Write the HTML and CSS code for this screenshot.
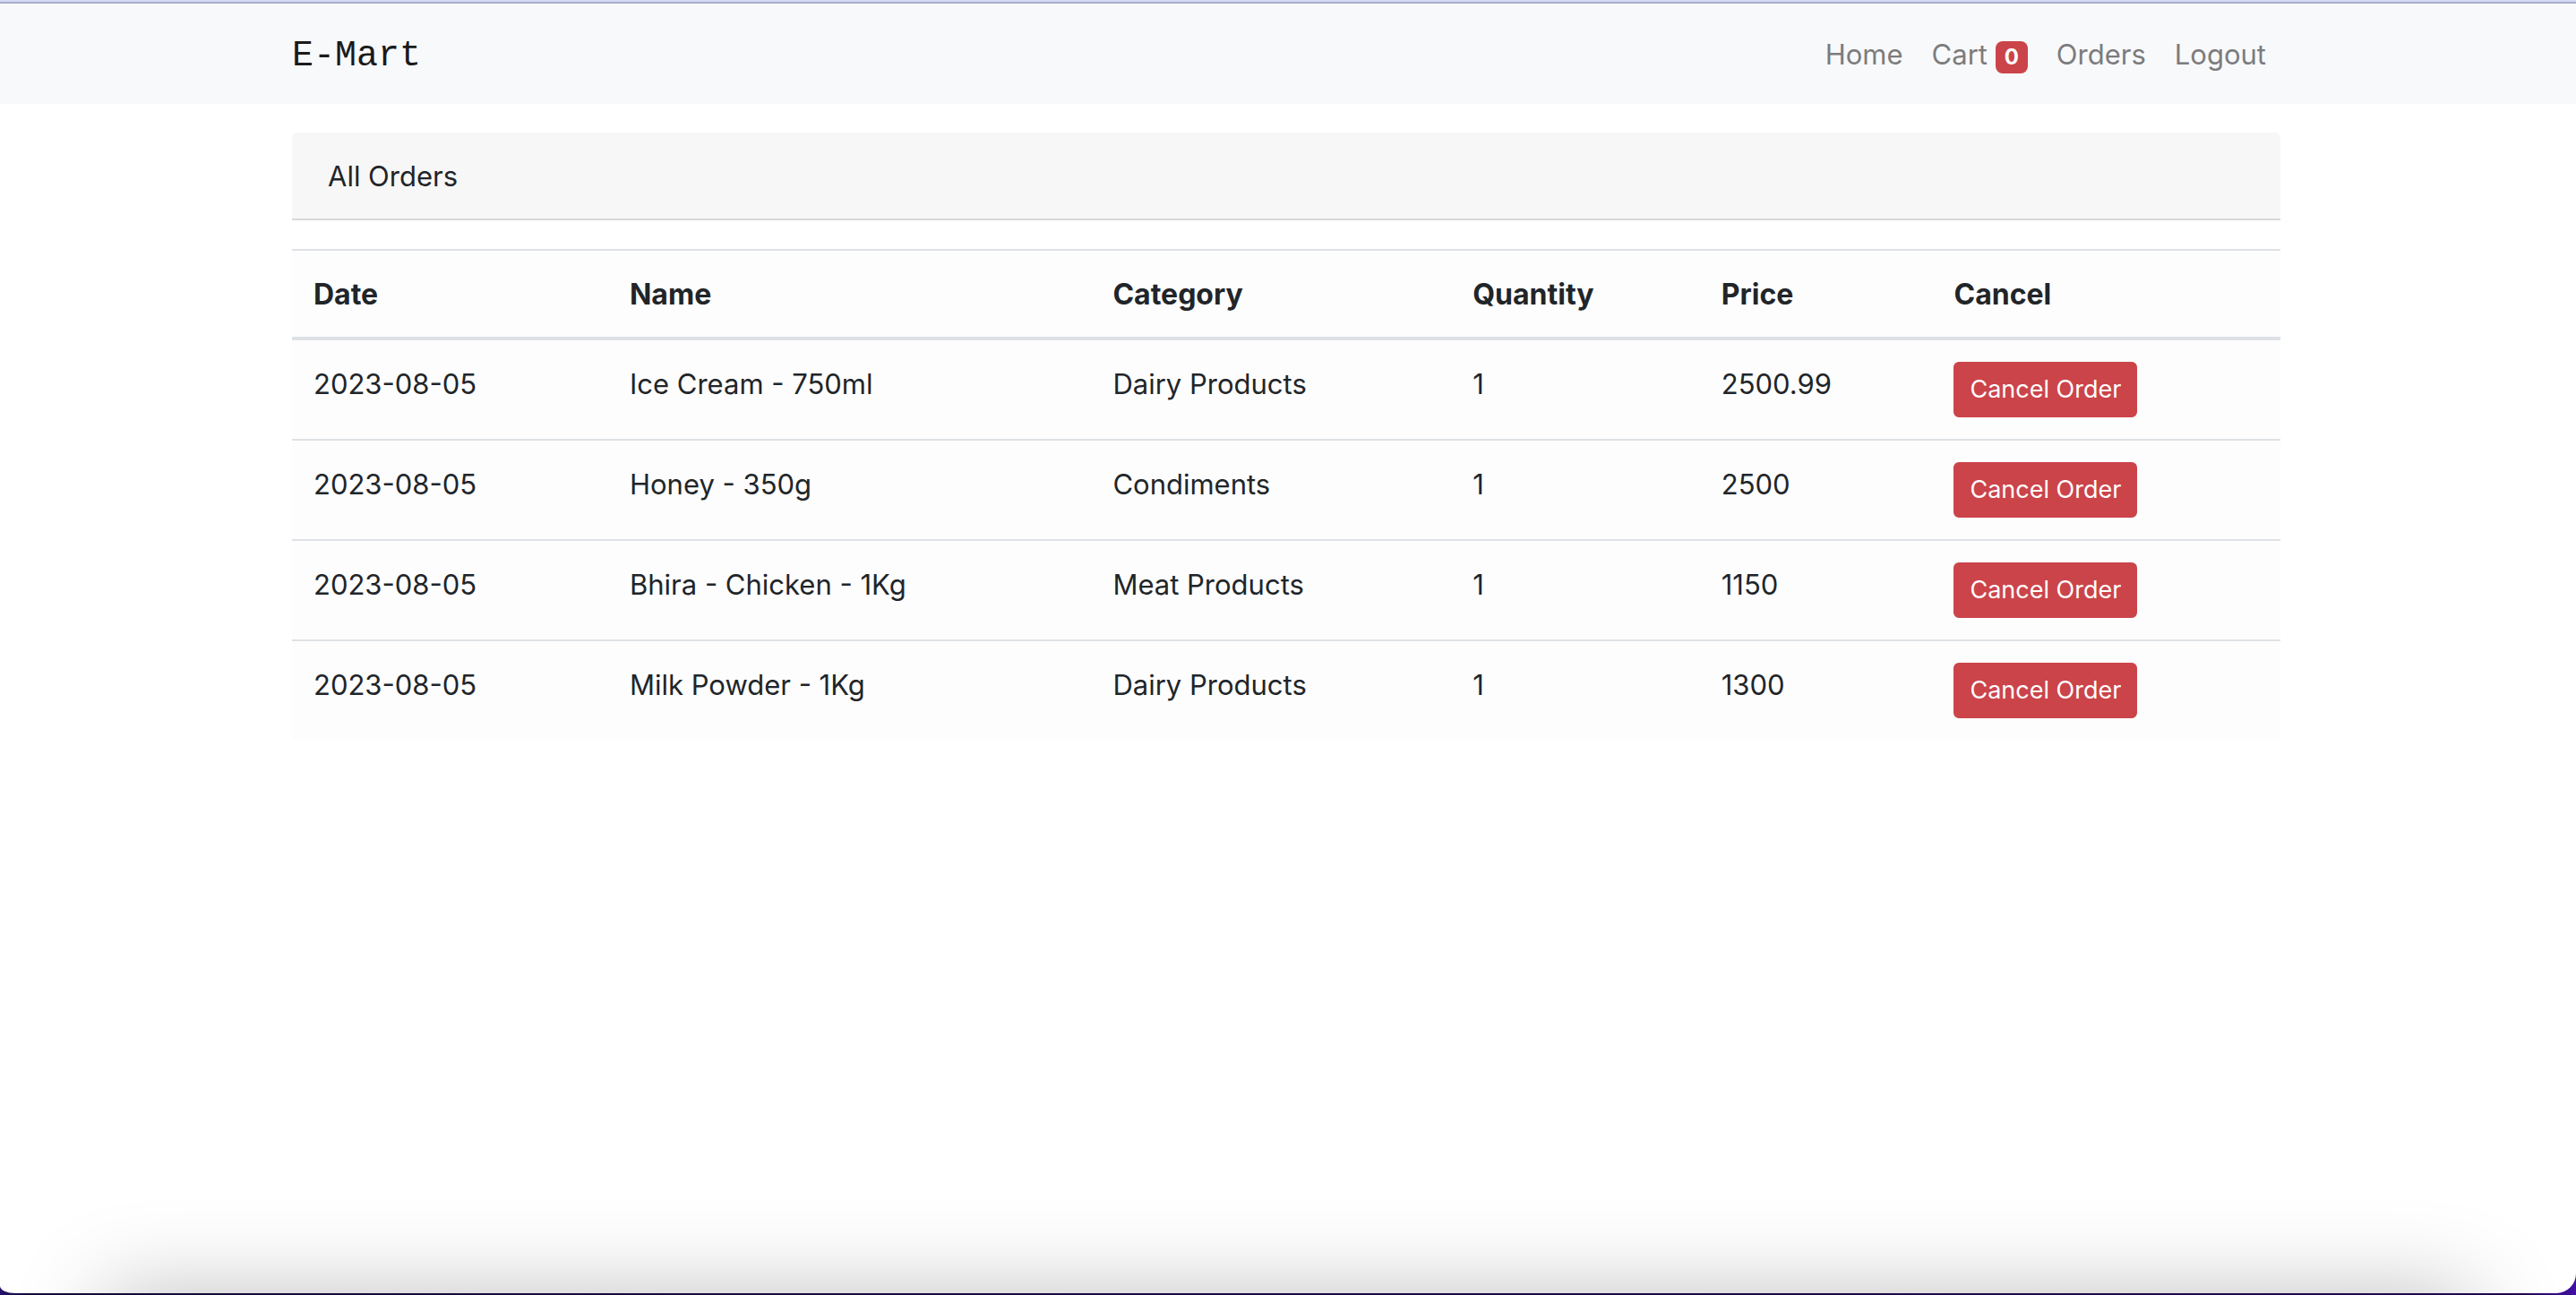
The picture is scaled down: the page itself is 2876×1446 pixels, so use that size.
FILE: index.html
```html
<!DOCTYPE html>
<html lang="en">
<head>
  <meta charset="utf-8">
  <meta name="viewport" content="width=device-width, initial-scale=1">
  <title>E-Mart</title>
  <link rel="stylesheet" href="styles.css">
</head>
<body>
  <div class="page">
    <header class="navbar">
      <div class="container navbar-inner">
        <a class="brand" href="#">E-Mart</a>
        <nav class="nav">
          <a class="nav-link" href="#">Home</a>
          <a class="nav-link" href="#">Cart <span class="badge">0</span></a>
          <a class="nav-link" href="#">Orders</a>
          <a class="nav-link" href="#">Logout</a>
        </nav>
      </div>
    </header>

    <main class="container content">
      <h1 class="card-header">All Orders</h1>
      <table class="orders">
        <colgroup>
          <col class="col-date">
          <col class="col-name">
          <col class="col-category">
          <col class="col-quantity">
          <col class="col-price">
          <col class="col-cancel">
        </colgroup>
        <thead>
          <tr>
            <th scope="col">Date</th>
            <th scope="col">Name</th>
            <th scope="col">Category</th>
            <th scope="col">Quantity</th>
            <th scope="col">Price</th>
            <th scope="col">Cancel</th>
          </tr>
        </thead>
        <tbody>
          <tr>
            <td>2023-08-05</td>
            <td>Ice Cream - 750ml</td>
            <td>Dairy Products</td>
            <td>1</td>
            <td>2500.99</td>
            <td class="action"><button class="btn" type="button">Cancel Order</button></td>
          </tr>
          <tr>
            <td>2023-08-05</td>
            <td>Honey - 350g</td>
            <td>Condiments</td>
            <td>1</td>
            <td>2500</td>
            <td class="action"><button class="btn" type="button">Cancel Order</button></td>
          </tr>
          <tr>
            <td>2023-08-05</td>
            <td>Bhira - Chicken - 1Kg</td>
            <td>Meat Products</td>
            <td>1</td>
            <td>1150</td>
            <td class="action"><button class="btn" type="button">Cancel Order</button></td>
          </tr>
          <tr>
            <td>2023-08-05</td>
            <td>Milk Powder - 1Kg</td>
            <td>Dairy Products</td>
            <td>1</td>
            <td>1300</td>
            <td class="action"><button class="btn" type="button">Cancel Order</button></td>
          </tr>
        </tbody>
      </table>
    </main>
  </div>
</body>
</html>
```
FILE: styles.css
```css
*,
*::before,
*::after {
  box-sizing: border-box;
}

body {
  margin: 0;
  min-height: 100vh;
  padding-bottom: 2px;
  background: linear-gradient(90deg, #25106b 0, #150b38 30px, #22084f calc(100% - 60px), #420fa5 100%);
  color: #212529;
  font-family: Inter, "Liberation Sans", sans-serif;
  font-size: 31px;
  line-height: 48px;
}

.page {
  position: relative;
  overflow: hidden;
  min-height: calc(100vh - 2px);
  border-top: 2px solid #d5dbf7;
  border-radius: 0 0 22px 17px / 0 0 22px 8px;
  background: #fff;
}

/* soft shadow along the bottom edge of the window */
.page::after {
  content: "";
  position: absolute;
  top: 100%;
  left: 116px;
  right: 116px;
  height: 200px;
  box-shadow: 0 0 100px rgba(0, 0, 0, 0.25);
  pointer-events: none;
}

.container {
  width: 100%;
  max-width: 2284px;
  margin: 0 auto;
  padding: 0 34px 0 30px;
}

.navbar {
  border-top: 2px solid #a9adc6;
  background: #f8f9fb;
}

.navbar-inner {
  display: flex;
  align-items: center;
  justify-content: space-between;
  min-height: 112px;
}

.brand {
  padding-top: 6px;
  color: #1b1b1b;
  font-family: "Courier", "Courier New", "Liberation Mono", monospace;
  font-size: 40px;
  text-decoration: none;
}

.nav {
  display: flex;
}

.nav-link {
  padding: 17px 16px 15px;
  color: #7c7c7d;
  text-decoration: none;
}

.badge {
  display: inline-block;
  padding: 6px 10px;
  border-radius: 8px;
  background: #cb444a;
  color: #fff;
  font-size: 24px;
  font-weight: 700;
  line-height: 24px;
  vertical-align: baseline;
}

.content {
  padding-top: 32px;
}

.card-header {
  margin: 0 0 32px;
  padding: 25px 40px 23px;
  border-bottom: 2px solid #d8d8d8;
  border-radius: 6px 6px 0 0;
  background: #f7f7f7;
  font-size: 31px;
  font-weight: 400;
  line-height: 48px;
}

.orders {
  width: 100%;
  border-spacing: 0;
  table-layout: fixed;
  background: #fdfdfd;
}

.col-date { width: 15.9%; }
.col-name { width: 24.3%; }
.col-category { width: 18.1%; }
.col-quantity { width: 12.5%; }
.col-price { width: 11.7%; }
.col-cancel { width: 17.5%; }

.orders th,
.orders td {
  padding: 25px 24px 23px;
  text-align: left;
  vertical-align: top;
}

.orders .action {
  padding: 24px;
}

.orders th {
  border-top: 2px solid #dee2e6;
  border-bottom: 4px solid #dee2e6;
  font-size: 32px;
  font-weight: 700;
}

.orders tr + tr td {
  border-top: 2px solid #dee2e6;
}

.btn {
  display: block;
  padding: 8px 16px;
  border: 2px solid #cb444a;
  border-radius: 6px;
  background: #cb444a;
  color: #fff;
  font-family: inherit;
  font-size: 27px;
  line-height: 42px;
  white-space: nowrap;
  cursor: pointer;
}
```
